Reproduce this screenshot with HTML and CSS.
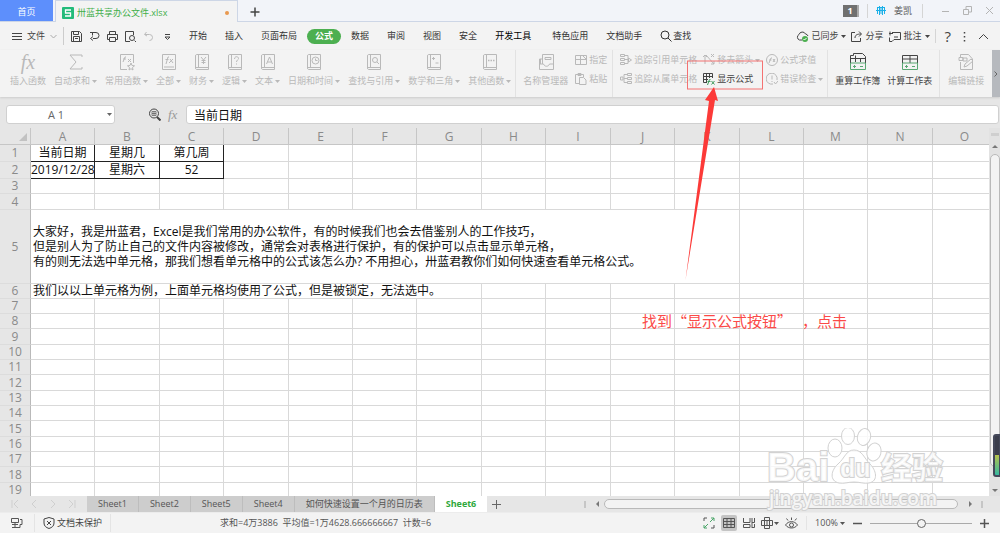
FILE: index.html
```
<!DOCTYPE html>
<html lang="zh-CN">
<head>
    <meta charset="UTF-8">
    <meta name="viewport" content="width=device-width, initial-scale=1.0">
    <title>卅蓝共享办公文件.xlsx</title>
    <link rel="stylesheet" href="styles.css">
</head>
<body>
    <svg class="defs" aria-hidden="true">
        <symbol id="book" viewBox="0 0 16 18">
            <path d="M2.5 1.500h12v15h-12a1.500 1.500 0 0 1-1-1.500V3a1.500 1.500 0 0 1 1-1.500zM1.500 14.500h13M4.500 1.500v13"/>
        </symbol>
        <symbol id="caret" viewBox="0 0 5 3"><path d="M0 0h5L2.500 3z" fill="currentColor" stroke="none"/></symbol>
    </svg>

    <div class="app">
        <header class="titlebar">
            <button class="home-tab">首页</button>
            <div class="file-tab">
                <svg width="12" height="12" viewBox="0 0 12 12"><rect width="12" height="12" rx="1" fill="#22bb7a" stroke="none"/><path d="M9 3H3.500v3h5v3H3" stroke="#fff" stroke-width="1.300"/></svg>
                <span>卅蓝共享办公文件.xlsx</span>
                <i class="dot"></i>
            </div>
            <button class="new-tab" aria-label="新建"><svg width="10" height="10"><path d="M5 .5v9M.5 5h9" stroke="#444" stroke-width="1.500"/></svg></button>
            <div class="window-tools">
                <span class="count">1</span>
                <i class="line"></i>
                <svg class="avatar" width="10" height="10" viewBox="0 0 10 10"><path d="M0 4.500h10M1.500 1v7M3.500 0v9M6.500 0v9M8.500 1v7M1 1.500h8M5 1v7" stroke="#1ab0e8"/></svg>
                <span>姜凯</span>
                <i class="line last"></i>
                <button aria-label="最小化"><svg width="9" height="9"><path d="M1 5.500h7"/></svg></button>
                <button aria-label="还原"><svg width="9" height="9"><path d="M.5 3.500h5v5h-5zM3 3V.5h5.500V6H6"/></svg></button>
                <button aria-label="关闭"><svg width="9" height="9"><path d="M1 1l7 7M8 1L1 8"/></svg></button>
            </div>
        </header>

        <nav class="menubar">
            <button class="file-menu">
                <svg width="10" height="9"><path d="M0 1.500h10M0 4.500h10M0 7.500h10"/></svg>文件
                <svg width="7" height="5"><path d="M.5 1l3 3 3-3" stroke="#aaa"/></svg>
            </button>
            <div class="quick">
                <button aria-label="保存"><svg width="11" height="11"><path d="M.5.5h8l2 2v8H.5zM2.500.5v3h5v-3M2.500 10.500v-5h6v5M4 7.500h3"/></svg></button>
                <button aria-label="输出"><svg width="11" height="11"><path d="M1 1.500h6a3 3 0 0 1 0 6H4M4 5.500l-2.500 2 2.500 2M3.500 1.500v3"/></svg></button>
                <button aria-label="打印"><svg width="11" height="11"><path d="M2.500 3V.5h6V3M2.500 8.500h-2v-5h10v5h-2M2.500 6.500h6v4h-6z"/></svg></button>
                <button aria-label="打印预览"><svg width="11" height="11"><path d="M5 10.500H.5V.5h8V4M9.500 9.500l1.500 1.500"/><circle cx="7" cy="7" r="2.500"/></svg></button>
                <button aria-label="撤消" class="off"><svg width="11" height="11"><path d="M3.500 1L1.500 3.500 4 5M2 3.500h4.500a3 3 0 0 1 0 6"/></svg></button>
                <button aria-label="更多"><svg width="7" height="7"><path d="M1 1.500h5M1 4h5L3.500 6.500z"/></svg></button>
            </div>
            <div class="tabs">
                <button>开始</button>
                <button>插入</button>
                <button>页面布局</button>
                <button class="current">公式</button>
                <button>数据</button>
                <button>审阅</button>
                <button>视图</button>
                <button>安全</button>
                <button class="dev">开发工具</button>
                <button>特色应用</button>
                <button>文档助手</button>
                <button class="find"><svg width="12" height="12"><circle cx="5" cy="5" r="4"/><path d="M8 8l3.500 3.500"/></svg>查找</button>
            </div>
            <div class="share">
                <button><svg width="13" height="12"><path d="M6 10H3.500a3 3 0 0 1-.5-5.500 3.500 3.500 0 0 1 6.500-.5A3 3 0 0 1 12 6"/><circle cx="9" cy="9" r="3" fill="#4caf50" stroke="none"/><path d="M7.500 9l1 1 2-2" stroke="#fff"/></svg>已同步<svg class="caret"><use href="#caret"/></svg></button>
                <button><svg width="12" height="11"><path d="M4 1.500H.5v9h9V7M4 7c0-3 2-4 6-4M8 .5L10.500 3 8 5.500"/></svg>分享</button>
                <button><svg width="13" height="11"><path d="M3 1.500h8.500v7H5l-2 2H.5v-4M1 .5v4M0 2.500h4M5 6h4"/></svg>批注<svg class="caret"><use href="#caret"/></svg></button>
                <i class="line"></i>
                <button class="help">?</button>
                <button aria-label="选项"><svg width="3" height="11"><path d="M1.500 1v1.500M1.500 5v1.500M1.500 9v1.500" stroke-width="1.500"/></svg></button>
                <button aria-label="收起"><svg width="11" height="7"><path d="M1 6l4.500-4.500L10 6"/></svg></button>
            </div>
        </nav>

        <section class="ribbon">
            <div class="group functions">
                <button class="big"><span class="fx">fx</span>插入函数</button>
                <button class="big"><svg width="16" height="18"><path d="M14 4V2H2l6 7-6 7h12v-2"/></svg><span>自动求和<svg class="caret"><use href="#caret"/></svg></span></button>
                <button class="big"><svg width="16" height="18"><path d="M8 16.500H1.500v-15h13V10M4 9l2-5h1M4 6h3M9 6l3 3M12 6L9 9"/><path d="M12 10l1 2.500 2.500.3-2 1.700.5 2.500-2-1.300-2 1.300.5-2.500-2-1.700 2.500-.3z"/></svg><span>常用函数<svg class="caret"><use href="#caret"/></svg></span></button>
                <button class="big"><svg width="16" height="18"><path d="M1.500 1.500h13v15h-13zM3 14h10M5 11l2-7h1M4.500 6.500h3M9 6l3 4M12 6l-4 4"/></svg><span>全部<svg class="caret"><use href="#caret"/></svg></span></button>
                <button class="big"><svg width="16" height="18"><use href="#book"/><path d="M7 4l2.500 3L12 4M9.500 7v4M7.500 7.500h4M7.500 9.500h4"/></svg><span>财务<svg class="caret"><use href="#caret"/></svg></span></button>
                <button class="big"><svg width="16" height="18"><use href="#book"/><path d="M7.500 6c0-3 4-3 4-.5C11.500 7 9.500 7 9.500 9M9.500 10.500v1"/></svg><span>逻辑<svg class="caret"><use href="#caret"/></svg></span></button>
                <button class="big"><svg width="16" height="18"><use href="#book"/><path d="M6.500 11l3-7 3 7M7.500 9h4"/></svg><span>文本<svg class="caret"><use href="#caret"/></svg></span></button>
                <button class="big"><svg width="16" height="18"><use href="#book"/><circle cx="9.500" cy="7.500" r="3.500"/><path d="M9.500 5.500v2h2"/></svg><span>日期和时间<svg class="caret"><use href="#caret"/></svg></span></button>
                <button class="big"><svg width="16" height="18"><use href="#book"/><circle cx="9" cy="7" r="2.500"/><path d="M11 9l2 2"/></svg><span>查找与引用<svg class="caret"><use href="#caret"/></svg></span></button>
                <button class="big"><svg width="16" height="18"><use href="#book"/><path d="M7.500 4v3M6 5.500h3M9.500 10h3"/></svg><span>数学和三角<svg class="caret"><use href="#caret"/></svg></span></button>
                <button class="big"><svg width="16" height="18"><use href="#book"/><path d="M6 7.500h7" stroke-width="1.500" stroke-dasharray="1.500 1"/></svg><span>其他函数<svg class="caret"><use href="#caret"/></svg></span></button>
            </div>
            <div class="group names">
                <button class="big"><svg width="16" height="18"><path d="M4.500 11V1.500h11v15h-14V6h3M1.500 11h4c1 3 5 3 6 0h4M7 4.500h6v2H7zM2.500 6v5"/></svg>名称管理器</button>
                <div class="pair">
                    <button class="small"><svg width="12" height="12"><path d="M.5 1.500h11v9H.5zM.5 5.500h11M5.500 1.500v9M7 1l4 4"/></svg>指定</button>
                    <button class="small"><svg width="12" height="12"><path d="M4 10.500H.5v-9h8V4M3 .5h3v2H3zM4.500 4.500h4l2.500 2.500v4.500H4.500z"/></svg>粘贴</button>
                </div>
            </div>
            <div class="group audit">
                <div class="pair">
                    <button class="small"><svg width="12" height="12"><path d="M.5.5h4v2h-4zM.5 4.500h4v2h-4zM.5 8.500h4v2h-4zM4.500 1.500H8v8H4.500M4.500 5.500H8"/><path d="M8.500 4l3 2-3 2z"/></svg>追踪引用单元格</button>
                    <button class="small"><svg width="12" height="12"><path d="M7.500.5h4v2h-4zM7.500 4.500h4v2h-4zM7.500 8.500h4v2h-4zM7.500 1.500H4v8h3.500M4 5.500h3M.5 4h2.500v3H.5z"/></svg>追踪从属单元格</button>
                </div>
                <div class="pair">
                    <button class="small"><svg width="12" height="12"><path d="M2 1v9M0 3l2-2 2 2M3 1l8 9M8 10h3V7M8 3l3-3M8 0l3 3"/></svg>移去箭头<svg class="caret"><use href="#caret"/></svg></button>
                    <button class="small on"><svg width="12" height="12"><path d="M4 9.500H.5v-9h9V5M.5 3.500h9M3.500.5v9M6.500.5V5M.5 6.500H5"/><path d="M4.500 12l2-5.500h1M4.500 8.500h3M8.500 8l3 3.500M11.500 8l-3 3.500" stroke="#3f9b5c"/></svg>显示公式</button>
                </div>
                <div class="pair">
                    <button class="small"><svg width="12" height="12"><circle cx="6" cy="6" r="5.500"/><path d="M3 9l2-5h1M3 6h2.500M7 5l2 3M9 5L7 8"/></svg>公式求值</button>
                    <button class="small"><svg width="12" height="12"><path d="M7 11a5.500 5.500 0 1 1 4-4M6 2.500v4M6 8v1M8 9l1.500 2L12 8"/></svg>错误检查<svg class="caret"><use href="#caret"/></svg></button>
                </div>
            </div>
            <div class="group calc">
                <button class="big on"><svg width="16" height="18"><path d="M.5 10V2.500h3v-2h9l3 3V10M.5 5.500h15M5.500 2.500V9M10.500 5.500V9"/><path d="M.5 10v6.500h15V10zM3 13.500h3M4.500 12v3M10 13.500h3" stroke="#5aa873"/></svg>重算工作簿</button>
                <button class="big on"><svg width="16" height="18"><path d="M.5 10V2.500h15V10M.5 6h15M8 2.500V10"/><path d="M.5 10v6.500h15V10zM3 13.500h3M4.500 12v3M10 13.500h3" stroke="#5aa873"/></svg>计算工作表</button>
            </div>
            <div class="group links">
                <button class="big"><svg width="16" height="18"><path d="M2.500 9v7.500h12V6l-4-4.500h-8V4M1 4.500h4v3H1zM5 5h4v3H5zM6 14l1-3 6-5 2 2-6 5z"/></svg>编辑链接</button>
            </div>
            <button class="ribbon-next" aria-label="更多命令"><svg width="4" height="6"><path d="M.5.5L3 3 .5 5.500"/></svg></button>
        </section>

        <div class="formulabar">
            <div class="namebox"><input type="text" value="A 1" aria-label="名称框"><svg class="caret"><use href="#caret"/></svg></div>
            <button aria-label="查找"><svg width="13" height="13"><circle cx="6" cy="5.500" r="4.500"/><path d="M9 9l3.500 3.500" stroke-width="2"/><path d="M4 3.500h4v4H4zM6 3.500v4M4 5.500h4" opacity=".6"/></svg></button>
            <span class="fx">fx</span>
            <input class="formula" type="text" value="当前日期" aria-label="编辑栏">
        </div>

        <main class="sheet">
            <div class="cells">
                <table id="grid"></table>
            </div>
            <div class="vscroll">
                <i class="split"></i>
                <i class="arrow up"></i>
                <i class="thumb"></i>
                <i class="arrow down"></i>
                <i class="meter"></i>
            </div>
            <svg class="watermark" width="190" height="90" viewBox="0 0 190 90">
                <ellipse cx="74" cy="20" rx="7" ry="9"/>
                <ellipse cx="87" cy="8" rx="6.500" ry="8.500"/>
                <ellipse cx="103" cy="9" rx="6.500" ry="8.500" transform="rotate(15 103 9)"/>
                <ellipse cx="113" cy="24" rx="7" ry="9" transform="rotate(15 113 24)"/>
                <path d="M93 22c8 0 10 8 16 14s9 17-1 19c-5 1-9-1-15-1s-10 2-15 1c-10-2-8-13-1-19s8-14 16-14z"/>
                <text x="6" y="53" class="wm-latin">Bai</text>
                <text x="79" y="49" class="wm-du">du</text>
                <text x="120" y="51" class="wm-cn">经验</text>
                <text x="8" y="77" class="wm-url">jingyan.baidu.com</text>
            </svg>
        </main>

        <div class="sheetbar">
            <div class="sheet-nav">
                <button aria-label="第一张"><svg width="8" height="8"><path d="M1 0v8M7 0L3 4l4 4"/></svg></button>
                <button aria-label="上一张"><svg width="8" height="8"><path d="M6 0L2 4l4 4"/></svg></button>
                <button aria-label="下一张"><svg width="8" height="8"><path d="M2 0l4 4-4 4"/></svg></button>
                <button aria-label="最后一张"><svg width="8" height="8"><path d="M7 0v8M1 0l4 4-4 4"/></svg></button>
            </div>
            <button class="sheet-tab">Sheet1</button>
            <button class="sheet-tab">Sheet2</button>
            <button class="sheet-tab">Sheet5</button>
            <button class="sheet-tab">Sheet4</button>
            <button class="sheet-tab">如何快速设置一个月的日历表</button>
            <button class="sheet-tab active">Sheet6</button>
            <button class="add-sheet" aria-label="新建工作表"><svg width="9" height="9"><path d="M4.500 0v9M0 4.500h9"/></svg></button>
            <div class="hscroll">
                <i class="grip"></i>
                <i class="arrow left"></i>
                <i class="thumb"></i>
                <i class="arrow right"></i>
                <i class="grip"></i>
            </div>
        </div>

        <footer class="status">
            <button class="mode" aria-label="模式"><svg width="12" height="12"><path d="M.5 1.500h7v4h-7zM4 5.500v5M1 10.500h8v-3h2V2.500H9M1 7.500h6"/></svg></button>
            <button class="protect"><svg width="12" height="12"><path d="M6 .5l5 1.500v4c0 3-2 4.500-5 5.500-3-1-5-2.500-5-5.500V2zM4 4l4 4M8 4L4 8"/></svg>文档未保护</button>
            <span class="sum">求和=4万3886&nbsp; 平均值=1万4628.666666667&nbsp; 计数=6</span>
            <div class="views">
                <button aria-label="全屏"><svg width="12" height="12"><path d="M1 4V1h3M8 11h3V8"/><path d="M8 1h3v3M11 1L7 5M4 11H1V8M1 11l4-4" stroke="#4aa568"/></svg></button>
                <button aria-label="普通视图" class="picked"><svg width="12" height="12"><path d="M.5 1.500h11v9H.5zM.5 4.500h11M.5 7.500h11M4 1.500v9M8 1.500v9"/></svg></button>
                <button aria-label="分页预览"><svg width="12" height="12"><path d="M.5 1v4.500H7V1M.5 7.500H7v3H.5zM9 1v10M11.500 1v4.500H9M11.500 7v3.500H9"/></svg></button>
                <button aria-label="阅读模式"><svg width="12" height="12"><path d="M3.500.5h5v11h-5zM.5 3.500h11v5H.5zM6 3.500v5"/></svg><svg class="caret"><use href="#caret"/></svg></button>
                <button aria-label="护眼模式"><svg width="13" height="12"><path d="M.5 8c3-4.500 9-4.500 12 0-3 4-9 4-12 0zM6.500 3V.5M3 3.500L1.500 1.500M10 3.500l1.500-2"/><circle cx="6.500" cy="8" r="2"/></svg></button>
            </div>
            <div class="zoom">
                <button>100% <svg class="caret"><use href="#caret"/></svg></button>
                <button aria-label="缩小"><svg width="9" height="9"><path d="M0 4.500h9" stroke-width="1.500"/></svg></button>
                <input type="range" min="0" max="200" value="100" aria-label="缩放">
                <button aria-label="放大"><svg width="9" height="9"><path d="M0 4.500h9M4.500 0v9" stroke-width="1.500"/></svg></button>
            </div>
        </footer>

        <svg class="pointer" width="90" height="225" viewBox="0 0 90 225">
            <rect x="7.500" y="1" width="75" height="28" fill="none" stroke="#f47272"/>
            <path d="M34 27l4 14-3-1L5.500 220 29 41l-4-1z" fill="#fc3a38" stroke="none"/>
        </svg>
        <p class="tip">找到“显示公式按钮”&nbsp;&nbsp;&nbsp;，点击</p>
    </div>
    <script src="script.js"></script>
</body>
</html>
```

FILE: styles.css
```
* { box-sizing: border-box; }
body {
    margin: 0;
    font-family: "Open Sans", "Noto Sans CJK SC", sans-serif;
    font-size: 9px;
    line-height: 14px;
    color: #444;
}
button {
    display: flex;
    align-items: center;
    padding: 0;
    border: 0;
    background: none;
    font: inherit;
    color: inherit;
    white-space: nowrap;
}
input { border: 0; padding: 0; font-family: inherit; color: inherit; }
svg { fill: none; stroke: currentColor; flex: none; }
i { display: block; flex: none; }
.defs { position: absolute; width: 0; height: 0; }
.caret { width: 5px; height: 3px; margin-left: 2px; }
.line { width: 1px; height: 14px; background: #d5d5d5; }
.app { position: relative; display: flex; flex-direction: column; height: 100vh; overflow: hidden; background: #f3f3f3; }

/* title bar */
.titlebar { display: flex; height: 22px; flex: none; background: #f2f4f9; border-bottom: 1px solid #cdd6e6; }
.home-tab { width: 53px; justify-content: center; background: #5d8ffc; color: #fff; padding-top: 2px; }
.file-tab {
    display: flex;
    align-items: center;
    gap: 3px;
    width: 183px;
    height: 22px;
    margin-left: 2px;
    padding: 2px 8px 0 6px;
    background: #f3f3f3;
    border: 1px solid #cdd6e6;
    border-bottom: 0;
    color: #3fae49;
}
.dot { width: 4px; height: 4px; border-radius: 50%; background: #e9994f; margin-left: auto; }
.new-tab { margin-left: 12px; padding-top: 2px; }
.window-tools { display: flex; align-items: center; margin-left: auto; padding-right: 4px; gap: 8px; color: #555; }
.window-tools button { width: 14px; justify-content: center; color: #b4b4b4; }
.window-tools .last { margin: 0 7px 0 2px; }
.count { width: 16px; height: 12px; line-height: 12px; background: #707070; border-right: 2px solid #aaa; color: #fff; font-weight: bold; text-align: center; }

/* menu */
.menubar { display: flex; align-items: center; height: 28px; flex: none; }
.file-menu { gap: 5px; width: 64px; padding-left: 12px; height: 18px; border-right: 1px solid #ccc; }
.quick { display: flex; align-items: center; gap: 7px; width: 116px; padding-left: 7px; }
.quick button:last-child { margin-left: 3px; }
.off { color: #bbb; }
.tabs { display: flex; align-items: center; color: #333; }
.tabs button { padding: 0 9px; height: 15px; }
.tabs .current { padding: 0 8px; margin: 0 1px; border-radius: 8px; background: #4caf50; color: #fff; font-weight: bold; }
.tabs .dev { margin-right: 3px; color: #000; }
.tabs .find { gap: 1px; }
.share { display: flex; align-items: center; gap: 5px; margin-left: auto; padding-right: 11px; }
.share button { gap: 2px; }
.share .caret { margin-left: 1px; }
.share .help { font-size: 15px; margin: 0 7px 0 4px; }
.share .help + button { margin-right: 7px; }

/* ribbon */
.ribbon { display: flex; height: 47px; flex: none; color: #b9b9b9; box-shadow: 0 1px 2px #ccc; position: relative; }
.group { display: flex; align-items: flex-start; padding: 3px 8px 0; border-right: 1px solid #e2e2e2; }
.big { flex-direction: column; gap: 3px; }
.big span { display: flex; align-items: center; }
.fx { font-family: "Liberation Serif", serif; font-style: italic; }
.big .fx { display: block; height: 18px; line-height: 18px; font-size: 20px; }
.functions { gap: 8px; padding: 3px 4px 0 10px; }
.pair { display: flex; flex-direction: column; gap: 5px; }
.small { gap: 2px; }
.small .caret { margin-left: 0; }
.names { gap: 7px; padding: 3px 5px 0 7px; }
.audit { gap: 6px; padding: 3px 4px 0 7px; }
.calc { gap: 7px; padding: 3px 7px 0; }
.links { border: 0; }
.on { color: #444; }
.ribbon-next { width: 9px; margin-left: auto; justify-content: center; background: #b6b9be; color: #666; }

/* formula bar */
.formulabar { display: flex; align-items: center; height: 31px; flex: none; padding: 4px 1px 0 6px; background: #e6e6e6; }
.namebox { display: flex; align-items: center; width: 109px; height: 19px; padding-right: 2px; background: #fff; border: 1px solid #d0d0d0; border-radius: 3px; color: #666; }
.namebox input { flex: 1; min-width: 0; height: 15px; text-align: center; font-size: 11px; background: none; }
.formulabar button { margin: 0 7px 0 33px; }
.formulabar .fx { width: 18px; font-size: 13px; color: #999; }
.formula { flex: 1; min-width: 0; height: 19px; padding: 0 7px; border: 1px solid #d0d0d0; border-radius: 3px; font-size: 12px; color: #111; }

/* cells */
.sheet { position: relative; display: flex; flex: 1; min-height: 0; }
.cells { flex: 1; min-width: 0; overflow: hidden; background: #fff; }
#grid { table-layout: fixed; width: 0; border-collapse: separate; border-spacing: 0; font-size: 12px; color: #111; }
#grid th, #grid td { height: 15px; padding: 0; border: solid #d9d9d9; border-width: 0 1px 1px 0; line-height: 14px; white-space: nowrap; }
#grid th { background: #e6e6e6; color: #8a8a8a; font-weight: normal; }
#grid thead th { height: 17px; padding-top: 2px; border-color: #c6c6c6; }
#grid tbody th { border-right-color: #b9b9b9; border-bottom-color: #dcdcdc; }
#grid .mid th, #grid .mid td { height: 16px; }
#grid .data th, #grid .data td { height: 17px; }
#grid .note th, #grid .note td { height: 74px; }
#grid .note td, #grid .spill { padding-left: 2px; text-align: left; line-height: 15px; }
#grid .spill { line-height: 14px; }
#grid .boxed { border-color: #222; text-align: center; }
.head { width: 31px; }
.col { width: 64px; }
.wide { width: 65px; }
.corner::after { content: ""; display: block; width: 8px; height: 8px; margin-left: 19px; background: #c2c2c2; clip-path: polygon(100% 0, 100% 100%, 0 100%); }

/* scroll bars */
.vscroll { display: flex; flex-direction: column; align-items: center; width: 11px; background: #e2e2e2; padding: 5px 0 4px; }
.split { width: 8px; height: 3px; background: #cfcfcf; }
.arrow { border: 3px solid transparent; }
.up { margin: 9px 0 6px; border-bottom-color: #777; border-top: 0; }
.down { margin: 22px 0 0; border-top-color: #777; border-bottom: 0; }
.vscroll .thumb { flex: 1; width: 10px; background: #f3f3f3; border: 1px solid #b9b9b9; border-radius: 5px; }
.meter {
    position: absolute;
    right: 0;
    bottom: 19px;
    width: 7px;
    height: 43px;
    border: 2px solid #44485a;
    border-right-width: 1px;
    border-radius: 3px 0 0 3px;
    background: linear-gradient(#3a3d4c 50%, #b3c24d 50%, #35b8a0);
}
.watermark { position: absolute; right: 49px; bottom: -22px; z-index: 2; stroke: #d2d2d2; fill: #fff; fill-opacity: 0.8; }
.watermark text { paint-order: stroke; stroke-width: 2px; }
.wm-latin { font: bold 40px "Liberation Sans", sans-serif; }
.wm-du { font: bold 25px "Liberation Sans", sans-serif; }
.wm-cn { font: bold 31px "Noto Sans CJK SC", sans-serif; }
.wm-url { font: 600 19px "Open Sans", sans-serif; }

/* sheet tabs */
.sheetbar { display: flex; align-items: stretch; height: 16px; flex: none; background: #e6e6e6; }
.sheet-nav { display: flex; gap: 11px; width: 87px; padding-left: 11px; color: #cfcfcf; }
.sheet-tab { padding: 0 11px; background: #cdcdcd; border-right: 1px solid #bdbdbd; color: #555; }
.sheet-tab.active { background: #fff; border: 0; color: #2fa83c; font-weight: bold; }
.add-sheet { margin-left: 5px; color: #666; }
.hscroll { display: flex; align-items: center; gap: 5px; width: 416px; margin-left: auto; padding-right: 17px; }
.grip { width: 2px; height: 7px; background: #c6c6c6; }
.left { margin-left: 5px; border-right-color: #777; border-left: 0; }
.right { margin: 0 4px 0 6px; border-left-color: #777; border-right: 0; }
.hscroll .thumb { flex: 1; height: 10px; border: 1px solid #b9b9b9; border-radius: 5px; background: #f3f3f3; }

/* status bar */
.status { display: flex; align-items: center; height: 21px; flex: none; border-top: 1px solid #ececec; color: #555; }
.mode { width: 35px; height: 18px; padding-left: 11px; border-right: 1px solid #e4e4e4; }
.protect { gap: 2px; width: 76px; height: 18px; padding-left: 8px; border-right: 1px solid #e4e4e4; color: #444; }
.sum { margin-left: 109px; }
.views { display: flex; align-items: center; gap: 4px; margin-left: auto; }
.views button { min-width: 16px; height: 16px; justify-content: center; }
.views .caret { margin-left: 1px; }
.views .picked { border-radius: 2px; background: #c4c4c4; }
.zoom { display: flex; align-items: center; gap: 8px; margin-left: 7px; padding: 0 11px 0 8px; border-left: 1px solid #e4e4e4; }
.zoom input { appearance: none; width: 102px; height: 10px; margin: 0; background: linear-gradient(#aaa, #aaa) center / 100% 1px no-repeat; }
.zoom input::-webkit-slider-thumb { appearance: none; width: 9px; height: 9px; border: 1px solid #666; border-radius: 50%; background: #f3f3f3; }

/* red arrow and its caption */
.pointer { position: absolute; left: 680px; top: 60px; }
.tip { position: absolute; left: 642px; top: 311px; margin: 0; font-family: "Noto Sans CJK SC", sans-serif; font-size: 15px; line-height: 20px; color: #fb4a48; white-space: nowrap; }
```

FILE: script.js
```
const grid = document.getElementById('grid');
const columns = 'ABCDEFGHIJKLMNO'.split('');
const wideColumns = 'BDGIKN';

const values = {
    1: ['当前日期', '星期几', '第几周'],
    2: ['2019/12/28', '星期六', '52']
};
const note = '大家好，我是卅蓝君，Excel是我们常用的办公软件，有的时候我们也会去借鉴别人的工作技巧，<br>' +
    '但是别人为了防止自己的文件内容被修改，通常会对表格进行保护，有的保护可以点击显示单元格，<br>' +
    '有的则无法选中单元格，那我们想看单元格中的公式该怎么办? 不用担心，卅蓝君教你们如何快速查看单元格公式。';
const example = '我们以以上单元格为例，上面单元格均使用了公式，但是被锁定，无法选中。';

function rowClass(n) {
    if (n <= 2) return 'data';
    if (n === 5) return 'note';
    return [4, 9, 12, 15, 18].includes(n) ? 'mid' : '';
}

function rowCells(n) {
    // A5:K5 is merged, A6 spills over the empty cells beside it
    if (n === 5) return `<td colspan="11">${note}</td>` + '<td></td>'.repeat(4);
    if (n === 6) return `<td class="spill" colspan="7">${example}</td>` + '<td></td>'.repeat(8);
    return columns.map((c, i) => {
        const text = values[n] && values[n][i];
        return text ? `<td class="boxed">${text}</td>` : '<td></td>';
    }).join('');
}

let html = '<colgroup><col class="head">';
html += columns.map(c => `<col class="${wideColumns.includes(c) ? 'wide' : 'col'}">`).join('');
html += '</colgroup><thead><tr><th class="corner"></th>';
html += columns.map(c => `<th>${c}</th>`).join('') + '</tr></thead><tbody>';
for (let n = 1; n <= 19; n++) {
    html += `<tr class="${rowClass(n)}"><th>${n}</th>${rowCells(n)}</tr>`;
}
grid.innerHTML = html + '</tbody>';
```
